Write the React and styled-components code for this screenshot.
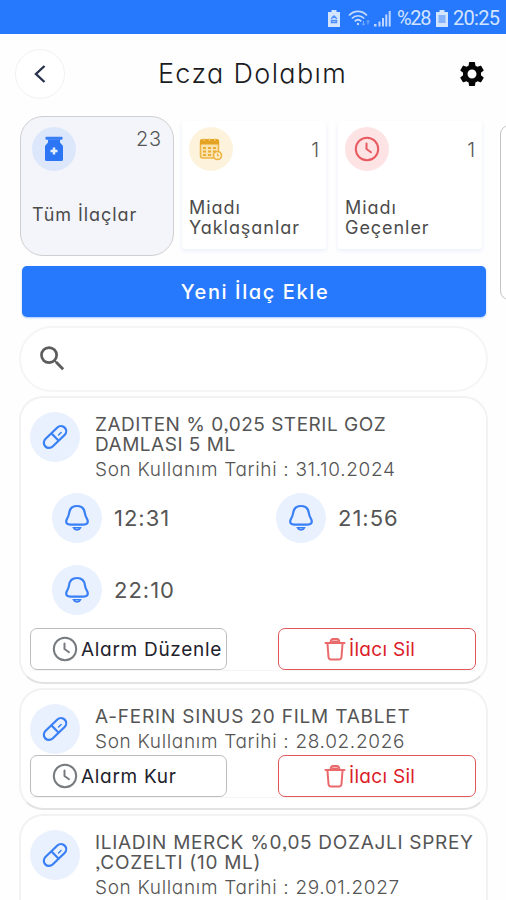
import React from "react";
import styled, { createGlobalStyle } from "styled-components";
import { MdSettings, MdSearch } from "react-icons/md";

const GlobalStyle = createGlobalStyle`
  * {
    box-sizing: border-box;
  }

  body {
    margin: 0;
    height: 900px;
    overflow: hidden;
    background-color: #fefefe;
    font-family: "Inter", "Open Sans", sans-serif;
    font-feature-settings: "cv11", "ss03";
    color: #555;
  }

  button {
    font-family: inherit;
    font-feature-settings: inherit;
    padding: 0;
    cursor: pointer;
  }
`;

const Screen = styled.div`
  width: 506px;
  height: 900px;
  overflow: hidden;
`;

const StatusBar = styled.div`
  display: flex;
  align-items: center;
  justify-content: flex-end;
  height: 34px;
  padding: 2px 6px 0 0;
  background-color: #2678fd;
  color: #d3e4ff;
  font-family: "Roboto", sans-serif;
  font-size: 20px;

  svg {
    display: block;
  }
`;

const StatusText = styled.span`
  width: ${(props) => props.$width}px;
  letter-spacing: ${(props) => props.$spacing}px;
  white-space: nowrap;
`;

const StatusIcon = styled.span`
  margin-right: ${(props) => props.$gap}px;
`;

const Header = styled.header`
  display: flex;
  align-items: center;
  justify-content: space-between;
  height: 79px;
  padding: 0 19px 0 15px;
`;

const BackButton = styled.button`
  display: flex;
  align-items: center;
  justify-content: center;
  width: 50px;
  height: 50px;
  border: 1px solid #f1f1f1;
  border-radius: 50%;
  background-color: #fff;
`;

const PageTitle = styled.h1`
  margin: 0 0 0 -17px;
  font-size: 27px;
  font-weight: 300;
  letter-spacing: 1.35px;
  color: #1b1b22;
`;

const TabRow = styled.div`
  display: flex;
  align-items: flex-start;
  height: 143px;
  padding: 3px 0 0 20px;
`;

const Tab = styled.div`
  display: flex;
  flex-direction: column;
  justify-content: space-between;
  flex: none;
  width: 144px;
  height: 128px;
  margin: 5px 12px 0 0;
  padding: 6px 6px 11px 7px;
  border-radius: 3px;
  background-color: #fff;
  box-shadow: 0 2px 4px rgba(70, 110, 230, 0.1);
`;

const ActiveTab = styled(Tab)`
  width: 154px;
  height: 140px;
  margin: 0 8px 0 0;
  padding: 10px 11px 30px 11px;
  border: 1.5px solid #cfcfd1;
  border-radius: 23px;
  background-color: #f3f5fa;
  box-shadow: none;
`;

const NextTab = styled(Tab)`
  height: 175px;
  margin: 9px 0 0 6px;
  border: 1px solid #c4c4c4;
  border-radius: 9px;
  box-shadow: none;
`;

const TabTop = styled.div`
  display: flex;
  justify-content: space-between;
`;

const TabIcon = styled.div`
  display: flex;
  align-items: center;
  justify-content: center;
  width: 44px;
  height: 44px;
  border-radius: 50%;
  background-color: ${(props) => props.$color};
`;

const TabCount = styled.span`
  margin-top: ${(props) => props.$top}px;
  font-size: 20px;
  font-weight: 300;
  line-height: 24px;
  letter-spacing: 0.8px;
`;

const TabLabel = styled.span`
  font-size: 18px;
  line-height: 20px;
  letter-spacing: 0.95px;
  white-space: pre-line;
  color: #4c4c4c;
`;

const AddButton = styled.button`
  display: block;
  width: 464px;
  height: 51px;
  margin: 10px 0 9px 22px;
  padding-left: 2px;
  border: none;
  border-radius: 5px;
  background-color: #2678fd;
  box-shadow: 0 1px 2px rgba(38, 120, 253, 0.4);
  color: #fff;
  font-size: 20px;
  font-weight: 500;
  letter-spacing: 1.6px;
`;

const SearchBox = styled.div`
  display: flex;
  align-items: center;
  width: 469px;
  height: 66px;
  margin: 0 0 4px 19px;
  padding: 0 0 2px 15px;
  border: 2px solid #f5f5f5;
  border-radius: 33px;
  background-color: #fff;
`;

const Card = styled.article`
  width: 469px;
  height: ${(props) => props.$height}px;
  margin: 0 0 4px 19px;
  padding: 14px 10px 0 9px;
  border: 2px solid #f2f2f2;
  border-bottom-color: #e3e3e3;
  border-radius: 24px;
  background-color: #fff;
`;

const CardTop = styled.div`
  display: flex;
  gap: 15px;
`;

const Circle = styled.div`
  display: flex;
  flex: none;
  align-items: center;
  justify-content: center;
  width: 50px;
  height: 50px;
  border-radius: 50%;
  background-color: #eaf1fe;
`;

const CardText = styled.div`
  padding-top: 3px;
  white-space: pre-line;
`;

const DrugName = styled.h2`
  margin: 0;
  font-size: 19px;
  font-weight: 400;
  line-height: 20px;
  letter-spacing: ${(props) => props.$spacing}px;
`;

const Expiry = styled.p`
  margin: 3px 0 0;
  font-size: 19px;
  font-weight: 300;
  line-height: 24px;
  letter-spacing: 0.67px;
`;

const AlarmGrid = styled.div`
  display: grid;
  grid-template-columns: 224px 1fr;
  row-gap: 22px;
  padding: 11px 0 0 22px;
`;

const Alarm = styled.div`
  display: flex;
  align-items: center;
  gap: 12px;
  font-size: 22px;
  letter-spacing: 1px;
`;

const Actions = styled.div`
  display: flex;
  justify-content: space-between;
  height: 43px;
  margin-top: ${(props) => props.$top}px;
  border-bottom: 1px solid #f5f5f5;
`;

const ActionButton = styled.button`
  display: flex;
  align-items: center;
  width: 197px;
  height: 42px;
  padding-left: 21px;
  border: 1px solid #bdbdbd;
  border-radius: 7px;
  background-color: #fff;
  color: #22222c;
  font-size: 19px;
  letter-spacing: 0.7px;
  white-space: nowrap;
  gap: 3px;
`;

const DeleteButton = styled(ActionButton)`
  width: 198px;
  padding-left: 45px;
  border-color: #e0565b;
  color: #dc2028;
  letter-spacing: 0.3px;
`;

const ClockIcon = ({ color }) => (
  <svg width="26" height="26" viewBox="0 0 26 26" fill="none" stroke={color} strokeWidth="2">
    <circle cx="13" cy="13" r="11.2" />
    <path d="M12.5 7.5v5.500l4.500 3.200" strokeLinecap="round" strokeLinejoin="round" />
  </svg>
);

const PillIcon = () => (
  <svg width="26" height="26" viewBox="0 0 26 26" fill="none" stroke="#397ff5" strokeWidth="2.200">
    <g transform="rotate(-44 13 13)">
      <rect x="-0.500" y="7.800" width="27" height="10.400" rx="5.200" />
      <path d="M13 8v10" />
      <path d="M17 14h3.500" strokeWidth="1.500" strokeLinecap="round" />
    </g>
  </svg>
);

const BellIcon = () => (
  <svg width="26" height="28" viewBox="0 0 26 28" fill="none" stroke="#397ff5" strokeWidth="2.200">
    <path
      d="M13 2C8.500 2 5.500 5 5 9.500C4.600 13.500 2.200 14.500 2.200 17.600C2.200 19.600 3.800 20.600 6.200 20.600H19.800C22.200 20.600 23.800 19.600 23.800 17.600C23.800 14.500 21.400 13.500 21 9.500C20.500 5 17.500 2 13 2Z"
      strokeLinejoin="round"
    />
    <path d="M9.500 23.800C10.500 26.500 15.500 26.500 16.500 23.800Z" strokeWidth="1.600" />
  </svg>
);

const TrashIcon = () => (
  <svg width="22" height="24" viewBox="0 0 22 24" fill="none" stroke="#ea6a6c" strokeWidth="2">
    <path d="M1.500 6h19M6.500 5.500C6.800 3 8 2 9 2h4c1 0 2.200 1 2.500 3.500" strokeLinecap="round" />
    <path d="M3.500 7l1 13c.1 1.500.9 2.500 2.500 2.500h8c1.600 0 2.400-1 2.500-2.500l1-13" />
    <path d="M8 4.500h6" />
  </svg>
);

const BottleIcon = () => (
  <svg width="20" height="26" viewBox="0 0 20 26">
    <rect x="1.500" y="0.800" width="17" height="3" rx="0.800" fill="#397df5" />
    <path
      d="M4 3.500h12v3l3 3.500v13.500a1.500 1.500 0 0 1-1.500 1.500h-15A1.500 1.500 0 0 1 1 23.500V10l3-3.500z"
      fill="#2c76f5"
    />
    <path d="M10 11.500v7M6.500 15h7" stroke="#e4eeff" strokeWidth="2.500" />
  </svg>
);

const CalendarIcon = () => (
  <svg width="24" height="24" viewBox="0 0 24 24">
    <rect x="1.500" y="3" width="18" height="18" rx="2" fill="#fbe3b0" stroke="#efb544" strokeWidth="1.500" />
    <path d="M1 7.500V4a2 2 0 0 1 2-2h15a2 2 0 0 1 2 2v3.500z" fill="#e5a323" />
    <path d="M5 1v3M10.500 1v3M16 1v3" stroke="#f7cf7c" strokeWidth="1.200" />
    <path d="M4 11h13M4 14.500h13M4 18h9" stroke="#e9ac35" strokeWidth="2" strokeDasharray="3 2" />
    <circle cx="18.500" cy="18.500" r="4" fill="#fcebc4" stroke="#eeb243" strokeWidth="1.600" />
    <path d="M18.500 16.500v2.200h1.500" fill="none" stroke="#e5a323" />
  </svg>
);

const BatteryIcon = () => (
  <svg width="12" height="17" viewBox="0 0 12 17">
    <path d="M3.500 0h5v2H12v15H0V2h3.500z" fill="#d3e4ff" />
    <path d="M2.500 5h7v8h-7z" fill="#86b3fb" />
  </svg>
);

const SaverIcon = () => (
  <svg width="12" height="17" viewBox="0 0 12 17">
    <path d="M3.500 0h5v2H12v15H0V2h3.500z" fill="#d3e4ff" />
    <path d="M3.200 8.800L6 6l2.800 2.800M3.500 10.500h5v2h-5z" fill="none" stroke="#4c8ffc" strokeWidth="1.500" />
  </svg>
);

const WifiIcon = () => (
  <svg width="22" height="17" viewBox="0 0 22 17" fill="none" stroke="#c4daff" strokeWidth="1.700">
    <path d="M1 5.500C6 0 14 0 19 5.500M3.800 8.500c3.500-3.700 8.900-3.700 12.400 0M6.700 11.300c2-2 4.600-2 6.600 0" />
    <circle cx="10" cy="14" r="1.200" fill="#c4daff" stroke="none" />
    <path d="M15.500 11v4M14 13.500l1.500 1.700 1.500-1.700M20 14.500v-4M18.700 12l1.300-1.500 1.300 1.500" stroke="#7badfd" strokeWidth="1" />
  </svg>
);

const SignalIcon = () => (
  <svg width="17" height="17" viewBox="0 0 17 17" fill="#bfd7ff">
    <path d="M0 14h2.500v2.500H0zM4.500 11.500h2v5h-2zM8 8h2v8.500H8zM11.300 4.500h2v12h-2zM14.700 1h2v15.500h-2z" />
  </svg>
);

const drugs = [
  {
    name: "ZADITEN % 0,025 STERIL GOZ\nDAMLASI 5 ML",
    expiry: "31.10.2024",
    alarms: ["12:31", "21:56", "22:10"],
    action: "Alarm Düzenle",
    height: 288,
    spacing: 0.5,
  },
  {
    name: "A-FERIN SINUS 20 FILM TABLET",
    expiry: "28.02.2026",
    alarms: [],
    action: "Alarm Kur",
    height: 122,
    spacing: 0.8,
  },
  {
    name: "ILIADIN MERCK %0,05 DOZAJLI SPREY\n,COZELTI (10 ML)",
    expiry: "29.01.2027",
    alarms: [],
    height: 142,
    spacing: 0.7,
  },
];

const DrugCard = ({ drug }) => (
  <Card $height={drug.height}>
    <CardTop>
      <Circle>
        <PillIcon />
      </Circle>
      <CardText>
        <DrugName $spacing={drug.spacing}>{drug.name}</DrugName>
        <Expiry>Son Kullanım Tarihi : {drug.expiry}</Expiry>
      </CardText>
    </CardTop>
    {drug.alarms.length > 0 && (
      <AlarmGrid>
        {drug.alarms.map((time) => (
          <Alarm key={time}>
            <Circle>
              <BellIcon />
            </Circle>
            {time}
          </Alarm>
        ))}
      </AlarmGrid>
    )}
    {drug.action && (
      <Actions $top={drug.alarms.length > 0 ? 13 : 1}>
        <ActionButton>
          <ClockIcon color="#777b80" />
          {drug.action}
        </ActionButton>
        <DeleteButton>
          <TrashIcon />
          İlacı Sil
        </DeleteButton>
      </Actions>
    )}
  </Card>
);

const App = () => {
  return (
    <>
      <GlobalStyle />
      <Screen lang="tr">
        <StatusBar>
          <StatusIcon $gap={8}>
            <SaverIcon />
          </StatusIcon>
          <StatusIcon $gap={4}>
            <WifiIcon />
          </StatusIcon>
          <StatusIcon $gap={6}>
            <SignalIcon />
          </StatusIcon>
          <StatusText $width={39} $spacing={-1.3}>
            %28
          </StatusText>
          <StatusIcon $gap={5}>
            <BatteryIcon />
          </StatusIcon>
          <StatusText $width={47} $spacing={-0.7}>
            20:25
          </StatusText>
        </StatusBar>

        <Header>
          <BackButton aria-label="Geri">
            <svg width="12" height="20" viewBox="0 0 12 20" fill="none" stroke="#27324d" strokeWidth="2.400">
              <path d="M10.500 2L2 10l8.500 8" />
            </svg>
          </BackButton>
          <PageTitle>Ecza Dolabım</PageTitle>
          <MdSettings size={30} color="#050505" />
        </Header>

        <TabRow>
          <ActiveTab>
            <TabTop>
              <TabIcon $color="#dce7fc">
                <BottleIcon />
              </TabIcon>
              <TabCount $top={0}>23</TabCount>
            </TabTop>
            <TabLabel>Tüm İlaçlar</TabLabel>
          </ActiveTab>
          <Tab>
            <TabTop>
              <TabIcon $color="#fdf2dc">
                <CalendarIcon />
              </TabIcon>
              <TabCount $top={11}>1</TabCount>
            </TabTop>
            <TabLabel>{"Miadı\nYaklaşanlar"}</TabLabel>
          </Tab>
          <Tab>
            <TabTop>
              <TabIcon $color="#fde3e4">
                <ClockIcon color="#e95a60" />
              </TabIcon>
              <TabCount $top={11}>1</TabCount>
            </TabTop>
            <TabLabel>{"Miadı\nGeçenler"}</TabLabel>
          </Tab>
          <NextTab />
        </TabRow>

        <AddButton>Yeni İlaç Ekle</AddButton>

        <SearchBox>
          <MdSearch size={33} color="#5c5c5c" />
        </SearchBox>

        {drugs.map((drug) => (
          <DrugCard key={drug.name} drug={drug} />
        ))}
      </Screen>
    </>
  );
};

export default App;
